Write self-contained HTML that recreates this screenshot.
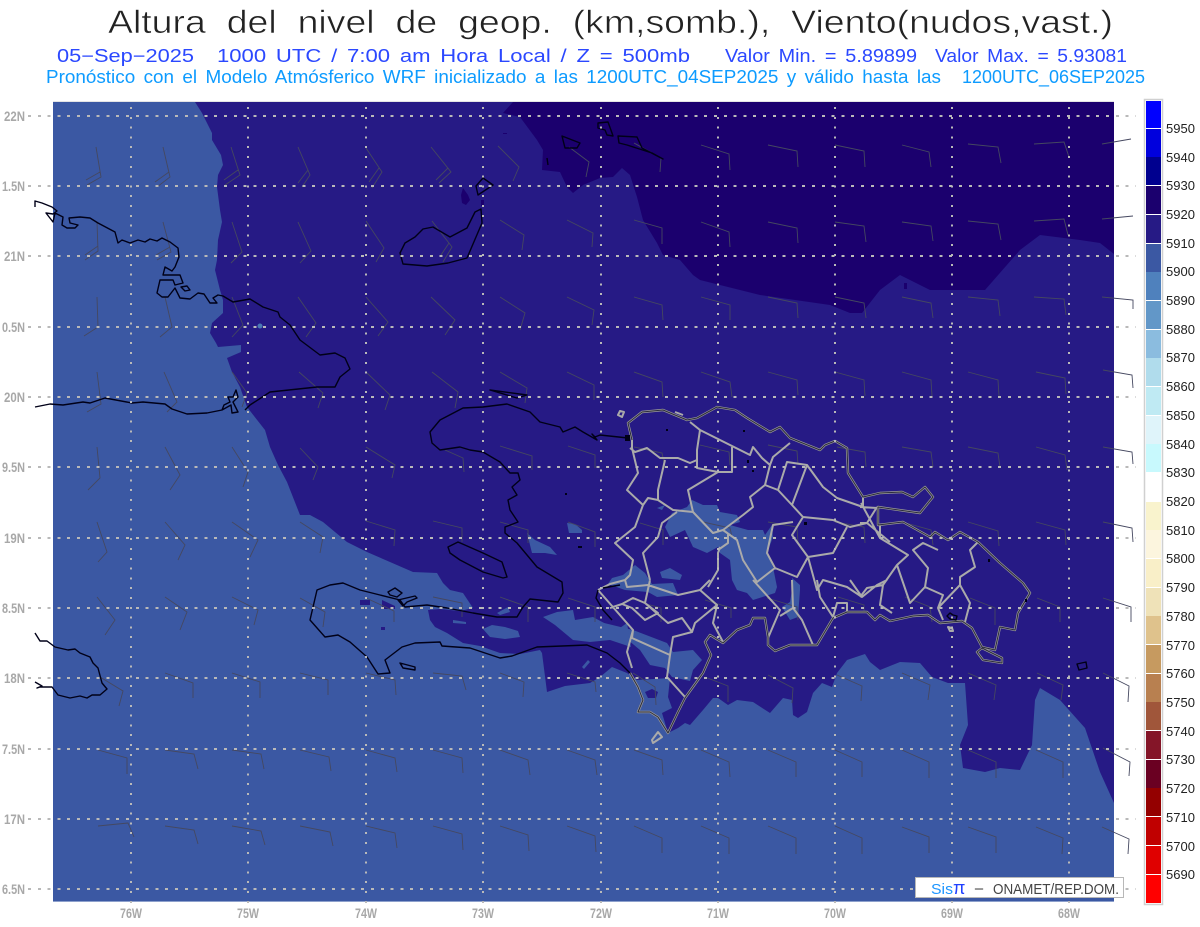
<!DOCTYPE html>
<html lang="es">
<head>
<meta charset="utf-8">
<title>Altura del nivel de geop.</title>
<style>
html,body{margin:0;padding:0;background:#fff;width:1200px;height:927px;overflow:hidden}
svg{display:block}
text{font-family:"Liberation Sans",sans-serif}
</style>
</head>
<body>
<svg width="1200" height="927" viewBox="0 0 1200 927" xmlns="http://www.w3.org/2000/svg">
<rect width="1200" height="927" fill="#fff"/>

<!-- headings -->
<text x="108" y="33" font-size="32" word-spacing="9" fill="#222" stroke="#fff" stroke-width=".55" paint-order="fill stroke" textLength="1005" lengthAdjust="spacingAndGlyphs">Altura del nivel de geop. (km,somb.), Viento(nudos,vast.)</text>
<g font-size="18" fill="#2b48ff" word-spacing="3">
<text x="57" y="62" textLength="137" lengthAdjust="spacingAndGlyphs">05−Sep−2025</text>
<text x="217" y="62" textLength="473" lengthAdjust="spacingAndGlyphs">1000 UTC / 7:00 am Hora Local / Z = 500mb</text>
<text x="725" y="62" textLength="192" lengthAdjust="spacingAndGlyphs">Valor Min. = 5.89899</text>
<text x="935" y="62" textLength="192" lengthAdjust="spacingAndGlyphs">Valor Max. = 5.93081</text>
</g>
<g font-size="18" fill="#0d9bff" word-spacing="3">
<text x="46" y="83" textLength="895" lengthAdjust="spacingAndGlyphs">Pronóstico con el Modelo Atmósferico WRF inicializado a las 1200UTC_04SEP2025 y válido hasta las</text>
<text x="962" y="83" textLength="183" lengthAdjust="spacingAndGlyphs">1200UTC_06SEP2025</text>
</g>

<!-- map fills -->
<rect x="53" y="101" width="1061" height="1" fill="#e4e4e4"/>
<rect x="53" y="102" width="1061" height="799" fill="#3b58a3"/>
<rect x="53" y="901" width="1061" height="1" fill="#8da0cc"/>
<path fill="#261a85" d="M195,102 202,113 212,133 212,140 221,155 223,165 218,175 217,187 220,210 222,222 218,240 217,260 215,270 220,290 223,300 223,313 212,323 210,333 216,343 218,347 241,345 241,352 227,358 232,372 240,387 247,407 265,430 270,447 278,465 287,482 300,515 310,515 323,522 347,542 367,552 390,562 413,572 437,573 443,583 450,590 463,593 473,608 460,611 440,609 428,610 430,620 435,627 447,633 463,643 480,646 500,653 520,654 540,650 542,653 547,692 565,686 590,683 600,677 612,667 627,673 637,680 670,678 668,697 672,708 662,713 668,733 678,728 685,723 690,725 703,710 713,698 718,698 728,705 737,700 753,702 770,713 783,698 792,700 793,715 798,718 807,712 813,693 822,683 827,685 832,687 837,673 847,660 865,654 870,662 880,670 900,662 920,663 932,677 948,683 965,683 968,725 960,745 963,768 985,772 1000,768 1020,770 1032,745 1035,700 1040,688 1060,700 1085,728 1100,772 1114,803 1114,102Z"/>
<path fill="#1b006e" d="M513,102 503,113 520,117 537,140 543,150 542,170 560,172 567,187 573,193 583,185 600,178 613,177 622,168 630,175 637,197 643,220 657,243 663,255 680,260 693,275 700,280 760,295 830,305 850,313 862,313 880,290 900,275 930,290 985,290 1020,250 1040,235 1080,240 1100,243 1114,254 1114,102Z"/>
<!-- light patches -->
<g fill="#3b58a3">
<path d="M692,500 703,505 717,505 720,512 737,515 740,522 730,525 748,530 763,530 765,535 772,525 773,537 767,553 773,567 777,587 775,593 753,600 747,593 737,590 732,580 730,560 720,553 718,547 707,553 693,547 685,530 670,537 665,527 672,513 687,507Z"/>
<path d="M792,578 800,585 800,590 798,617 790,620 782,607 790,602 792,590Z"/>
<path d="M635,565 645,573 652,584 673,583 678,595 657,597 648,592 625,590 608,584 612,578 623,575Z"/>
<path d="M660,572 670,568 682,575 680,580 662,578Z"/>
<path d="M590,624 600,622 633,630 667,643 673,652 693,650 702,660 693,670 690,681 672,677 665,668 650,665 640,650 628,640 610,632 598,640 590,640Z"/>
<path d="M453,620 466,622 466,624 453,623Z"/>
<path d="M483,629 492,625 505,627 518,631 520,637 505,639 490,637Z"/>
<path d="M543,617 557,612 573,610 575,620 593,617 617,630 627,623 631,647 610,640 590,642 573,640 555,625Z"/>
<path d="M567,523 575,524 582,530 582,533 569,533Z"/>
<path d="M527,533 535,540 550,547 557,555 545,553 532,553 530,545Z"/>
<path d="M497,613 508,607 510,612 500,615Z"/>
<path d="M657,508 665,505 662,510Z"/>
<path d="M582,667 588,660 590,662 584,669Z"/>
<circle cx="260" cy="326" r="2.5" fill="#4a78b5"/>
</g>
<g fill="#261a85">
<rect x="360" y="600" width="10" height="5"/>
<path d="M382,600 395,606 395,609 382,609Z"/>
<rect x="381" y="627" width="4" height="3"/>
<path d="M645,692 652,689 658,692 656,698 648,698Z"/>
<path d="M620,437 622,437 623,440 620,441Z"/>
</g>
<g fill="#1b006e">
<path d="M463,188 468,195 470,200 466,205 462,203 461,195Z"/>
<rect x="481" y="200" width="3" height="6"/>
<rect x="503" y="133" width="4" height="1"/>
<rect x="904" y="283" width="3" height="6"/>
</g>

<!-- wind barbs -->
<path fill="none" stroke="#454860" stroke-width=".9" d="
M96,147 101,177 87,185M100,172 86,180M163,147 170,177 157,187M169,172 155,182M231,147 240,175 225,185M238,170 224,180M298,147 310,175 302,187M308,170 298,183M366,148 382,172 372,188M379,168 369,182M431,147 451,172 439,183M448,168 436,180M498,146 519,167 513,181M569,147 589,162 586,177M634,143 661,158 660,172M701,145 729,154 730,170M768,145 797,151 798,167M835,145 864,151 865,167M902,145 929,152 931,167M968,144 998,147 1001,163M1034,144 1064,142 1069,157M1102,144 1131,139
M97,222 98,251 85,260M98,246 85,255M163,222 171,252 157,260M170,247 156,255M232,222 242,252 231,263M298,222 311,251 300,263M366,221 384,248 376,262M432,221 452,247 443,262M449,243 441,255M500,220 524,235 522,250M567,220 593,233 592,247M634,220 662,228 662,244M701,222 729,232 730,247M768,222 797,228 798,243M835,222 864,226 866,242M902,222 931,226 933,241M968,221 998,224 1001,240M1034,221 1064,219 1068,235M1102,219 1133,216
M97,297 98,327 84,336M165,297 172,327 160,337M232,297 243,325 232,337M298,297 316,323 306,337M366,297 388,322 378,336M431,297 455,320 445,335M500,297 525,313 520,330M567,297 594,310 592,325M634,297 662,305 663,320M701,297 730,305 730,320M768,297 797,303 798,318M835,297 864,303 866,318M902,297 931,303 933,318M968,297 998,300 1000,316M1034,297 1064,299 1066,315M1102,297 1133,300 1133,309
M97,372 101,404 87,412M164,372 177,402 167,412M232,372 247,393 242,407M299,372 323,393 318,408M366,372 390,395 385,410M432,372 458,392 455,408M500,372 527,388 525,403M567,372 594,385 594,400M634,372 662,382 663,397M701,372 730,382 732,397M768,372 797,380 798,395M835,372 864,380 865,396M902,372 931,380 932,396M968,372 998,380 999,396M1036,372 1065,378 1066,394M1103,370 1132,375 1133,388
M97,447 100,478 88,490M165,447 180,475 170,490M232,447 248,472 243,487M300,448 318,467 313,480M366,447 395,465 392,478M445,450 463,458 464,472M500,446 532,456 532,470M568,446 595,455 595,468M634,447 662,453 665,468M700,445 729,452 730,465M768,445 797,451 798,465M837,447 865,452 866,467M902,447 931,452 933,467M968,447 998,453 1000,467M1036,447 1065,455 1067,470M1103,447 1132,452 1133,464
M97,522 107,552 98,562M165,522 185,545 178,560M232,522 258,540 250,557M300,522 323,537 320,553M366,521 395,530 394,546M433,521 462,528 462,542M500,522 528,530 528,543M568,522 595,532 595,547M640,523 663,530 663,545M703,522 730,528 732,537M768,522 797,527 798,543M835,522 864,527 865,543M902,522 931,530 933,545M968,522 998,531 999,546M1036,522 1065,530 1066,545M1103,522 1132,528 1133,542
M97,597 115,620 105,635M165,597 187,612 180,630M232,597 258,610 254,625M300,598 325,612 323,627M366,598 394,611 394,622M433,597 462,603 462,617M500,597 528,607 528,622M568,598 595,607 595,622M643,603 661,608 661,622M705,600 731,608 731,618M767,598 797,607 798,620M838,597 864,605 864,612M905,597 930,607 932,622M970,598 995,608 995,625M1037,598 1060,607 1060,622M1103,598 1131,607 1131,622
M100,677 123,691 119,706M165,673 193,683 193,698M232,673 260,682 260,698M300,673 328,680 328,695M366,673 395,680 396,695M433,673 462,676 466,690M500,673 524,682 523,697M567,673 595,682 596,692M633,673 655,687 656,705M705,677 728,686 728,702M768,675 793,688 792,703M837,675 862,686 861,701M902,673 930,685 928,700M968,673 996,685 994,700M1037,673 1063,685 1061,700M1103,673 1129,686 1128,702
M98,750 127,758 127,774M165,750 194,754 198,769M232,750 261,754 264,769M300,750 329,757 331,771M366,750 395,758 397,772M433,750 462,758 463,773M500,750 528,760 530,775M567,750 595,760 597,775M634,750 662,760 663,775M701,750 729,762 730,777M768,750 796,762 796,777M835,750 862,762 862,777M902,750 929,762 929,778M968,750 996,762 996,778M1036,750 1063,762 1063,778M1103,748 1130,762 1129,776
M98,826 128,823 134,837M165,826 194,830 198,844M232,826 261,831 265,845M300,826 330,832 333,846M366,826 395,833 397,848M433,826 462,834 463,850M500,826 528,835 529,851M567,826 595,836 596,852M634,826 662,838 662,853M701,826 729,838 729,854M768,826 796,838 796,854M835,826 862,838 862,854M902,827 929,837 929,853M968,827 996,837 996,853M1036,827 1063,838 1062,854M1102,827 1129,839 1128,854"/>

<!-- province lines -->
<path fill="none" stroke="#aaaaaa" stroke-width="2" stroke-linejoin="round" d="
M632,440 632,448 638,473 627,490 643,505 635,527 615,543 633,560 630,575 625,580
M630,448 635,452 647,448 660,458 678,458 690,463 697,460 697,450 700,430 690,422
M700,430 730,445 750,455 753,447 762,458 770,465 773,457 790,443
M732,447 732,472 718,472 697,468 697,460
M665,460 658,490 658,500 673,510 693,512 688,490 708,478 718,472
M658,500 648,498 643,505
M693,512 713,533 723,530 743,515 753,507 750,497 765,485 770,465
M765,485 778,490 787,462 807,465 823,487 837,498 863,507 863,498
M807,465 792,505 778,490
M792,505 803,517 833,520 850,527 867,523 877,507
M867,523 890,542
M803,517 792,535 808,557 833,553 847,527
M808,557 797,577 775,568 767,553 773,525 793,522
M723,530 737,540 743,560 757,582 775,568
M677,512 662,523 658,537 643,553 650,580
M720,547 718,553 718,570 708,587
M718,550 728,543 728,533
M808,557 817,590 823,580 847,587 862,597 877,585 887,580
M850,580 862,597
M860,597 867,588 883,585 880,605 892,613
M883,585 897,565 908,555 880,538 861,503
M897,565 910,603 925,587 943,595 938,608 943,620
M925,587 928,568 913,550 923,543 938,550
M938,608 960,585 970,603 965,622
M960,585 960,577 975,567 970,550 978,542
M860,507 877,508M860,523 868,523M880,525 880,538
M598,590 633,630 627,652 632,668
M633,630 632,638 670,655 667,677 685,697
M598,590 610,584 625,580 627,587 648,585 678,595 700,590 710,580
M650,580 645,603 668,623 682,618 692,632 673,637 670,655
M610,608 622,604 633,598 645,603 658,613 645,620 632,608 622,604
M700,590 717,605 695,623 692,632
M717,605 713,623 723,642
M753,580 780,610 768,638
M780,616 793,608 802,620 813,645
M792,580 793,608
M817,580 820,597 833,617 837,603 847,603 847,612
M620,411 618,415 622,417 624,412Z
M675,412 683,415
M652,740 658,732 662,737 653,743Z
M948,627 952,628 953,631 950,631Z"/>

<!-- DR coast: grey under black -->
<g fill="none" stroke-linejoin="round">
<path stroke="#9a9a9a" stroke-width="2.4" d="M630,673 638,687 643,700 638,712 650,712 658,717 668,733 678,712 685,698 703,673 711,655 705,642 710,635 723,643 737,630 750,625 753,618 765,618 768,637 768,645 775,651 790,645 817,645 833,618 847,612 867,612 875,620 880,615 890,621 913,616 928,615 940,623 962,621 972,628 982,647 995,650 1000,627 1015,630 1018,613 1030,593 1023,583 1000,563 978,542 960,532 948,540 935,532 930,537 903,522 878,525 878,507 920,513 933,497 925,487 913,497 902,492 880,493 863,497 848,473 847,448 835,441 825,445 820,450 790,438 780,427 770,432 747,418 735,410 717,407 697,418 687,420 663,410 642,412 628,423 632,440 M977,652 982,648 1002,658 1002,663 983,660Z"/>
<path stroke="#2c2c3c" stroke-width="1" d="M630,673 638,687 643,700 638,712 650,712 658,717 668,733 678,712 685,698 703,673 711,655 705,642 710,635 723,643 737,630 750,625 753,618 765,618 768,637 768,645 775,651 790,645 817,645 833,618 847,612 867,612 875,620 880,615 890,621 913,616 928,615 940,623 962,621 972,628 982,647 995,650 1000,627 1015,630 1018,613 1030,593 1023,583 1000,563 978,542 960,532 948,540 935,532 930,537 903,522 878,525 878,507 920,513 933,497 925,487 913,497 902,492 880,493 863,497 848,473 847,448 835,441 825,445 820,450 790,438 780,427 770,432 747,418 735,410 717,407 697,418 687,420 663,410 642,412 628,423 632,440 M977,652 982,648 1002,658 1002,663 983,660Z"/>
</g>

<!-- black coasts -->
<path fill="none" stroke="#000018" stroke-width="1.4" stroke-linejoin="round" d="
M35,207 35,201 42,203 52,207 57,211 53,214 46,213 53,222 55,213 63,217 62,225 67,228 75,228 78,225 70,223 69,218 80,217 90,218 98,223 115,232 118,243 122,240 130,243 138,240 145,242 150,239 157,241 162,238 170,242 178,248 179,257 175,267 172,271 165,267 163,275 173,275 180,275 183,283 175,285 173,280 160,280 157,293 162,297 168,297 175,288 180,298 190,299 198,293 204,294 210,303 217,303 213,298 218,295 223,296 233,302 250,299 263,307 278,312 280,317 290,325 300,340 320,355 335,353 345,358 350,369 340,377 335,387 317,387 270,392 250,405 245,410
M35,407 50,404 63,405 83,402 90,403 105,398 132,403 143,402 165,404 172,409 187,414 207,413 222,410 224,405 230,402 228,397 233,397 236,390 238,397 233,402 238,412 232,413 231,405 222,410
M181,287 187,286 190,290 185,291Z
M400,253 405,243 415,237 423,229 433,227 450,237 467,228 475,212 481,209 482,223 467,258 448,263 427,266 403,264Z
M476,186 483,178 493,185 478,195Z
M562,136 580,143 577,148 565,148Z
M598,123 608,122 612,133 613,136 607,135 605,130 598,128Z
M618,136 637,137 642,148 663,159 652,153 627,145 619,143Z
M628,438 600,435 595,437 592,434 597,440 583,432 575,427 563,432 560,427 540,422 530,412 507,404 483,407 463,408 440,420 430,432 432,443 440,450 460,447 470,450 483,452 500,462 510,473 518,473 520,480 512,487 517,495 508,500 510,510 518,522 505,527 505,533 517,543 537,567 547,573 562,582 563,593 558,602 530,599 523,607 517,617 497,617 473,613 447,608 427,605 405,607 400,600 380,595 360,590 343,583 330,585 317,590 310,620 325,637 338,635 350,642 367,657 378,674 390,673 385,660 402,647 415,643 440,642 442,646 470,648 500,658 512,656 537,647 587,645 607,653 620,663 630,673
M598,590 596,598 603,610 612,620 M603,588 620,585
M448,547 458,542 483,553 502,562 507,577 503,578 483,572 460,560 450,553Z
M490,390 527,395 517,398Z
M400,663 415,667 415,670 403,668Z
M388,592 395,588 402,593 397,597 390,595Z
M398,600 415,596 417,598 407,602 403,606Z
M35,633 40,641 47,641 55,647 68,650 75,649 80,653 90,657 93,663 98,668 102,683 107,689 100,695 92,695 87,698 80,696 70,698 58,695 52,687 40,687 37,688 42,686 35,682
M947,616 950,613 953,615 957,616 956,620 950,619Z
M1077,664 1086,662 1087,668 1079,670Z
M547,158 548,165"/>
<g fill="#000018">
<rect x="625" y="435" width="5" height="6"/>
<rect x="988" y="559" width="2" height="3"/><rect x="1025" y="599" width="2" height="3"/>
<rect x="804" y="522" width="3" height="3"/><rect x="743" y="430" width="2" height="2"/>
<rect x="666" y="429" width="2" height="2"/><rect x="747" y="460" width="2" height="3"/>
<rect x="752" y="470" width="2" height="2"/><rect x="565" y="493" width="2" height="2"/><rect x="578" y="546" width="4" height="2"/>
</g>

<!-- dotted grid -->
<g fill="none" stroke="#b9b9b9" stroke-width="2" shape-rendering="crispEdges">
<path stroke-dasharray="3 6.8" d="M28,116H1136M28,186H1136M28,256H1136M28,327H1136M28,397H1136M28,467H1136M28,538H1136M28,608H1136M28,678H1136M28,749H1136M28,819H1136M28,889H1136"/>
<path stroke-dasharray="2 7.8" d="M131,107V906M248,107V906M366,107V906M483,107V906M601,107V906M718,107V906M835,107V906M952,107V906M1069,107V906"/>
</g>

<!-- axis labels -->
<g font-size="14" font-weight="700" fill="#a8a8a8" lengthAdjust="spacingAndGlyphs">
<text x="4" y="121" textLength="21" lengthAdjust="spacingAndGlyphs">22N</text><text x="2" y="191" textLength="23" lengthAdjust="spacingAndGlyphs">1.5N</text><text x="4" y="261" textLength="21" lengthAdjust="spacingAndGlyphs">21N</text><text x="2" y="332" textLength="23" lengthAdjust="spacingAndGlyphs">0.5N</text><text x="4" y="402" textLength="21" lengthAdjust="spacingAndGlyphs">20N</text><text x="2" y="472" textLength="23" lengthAdjust="spacingAndGlyphs">9.5N</text><text x="4" y="543" textLength="21" lengthAdjust="spacingAndGlyphs">19N</text><text x="2" y="613" textLength="23" lengthAdjust="spacingAndGlyphs">8.5N</text><text x="4" y="683" textLength="21" lengthAdjust="spacingAndGlyphs">18N</text><text x="2" y="754" textLength="23" lengthAdjust="spacingAndGlyphs">7.5N</text><text x="4" y="824" textLength="21" lengthAdjust="spacingAndGlyphs">17N</text><text x="2" y="894" textLength="23" lengthAdjust="spacingAndGlyphs">6.5N</text>
</g>
<g font-size="14" font-weight="700" fill="#a8a8a8">
<text x="120" y="918" textLength="22" lengthAdjust="spacingAndGlyphs">76W</text><text x="237" y="918" textLength="22" lengthAdjust="spacingAndGlyphs">75W</text><text x="355" y="918" textLength="22" lengthAdjust="spacingAndGlyphs">74W</text><text x="472" y="918" textLength="22" lengthAdjust="spacingAndGlyphs">73W</text><text x="590" y="918" textLength="22" lengthAdjust="spacingAndGlyphs">72W</text><text x="707" y="918" textLength="22" lengthAdjust="spacingAndGlyphs">71W</text><text x="824" y="918" textLength="22" lengthAdjust="spacingAndGlyphs">70W</text><text x="941" y="918" textLength="22" lengthAdjust="spacingAndGlyphs">69W</text><text x="1058" y="918" textLength="22" lengthAdjust="spacingAndGlyphs">68W</text>
</g>

<!-- logo box -->
<rect x="915.5" y="877.5" width="208" height="20" fill="#fff" stroke="#b8b8b8"/>
<text x="931" y="894" font-size="15" fill="#1d95ff" textLength="22" lengthAdjust="spacingAndGlyphs">Sis</text>
<text x="953" y="894" font-size="18" fill="#2040ff">π</text>
<text x="974" y="894" font-size="15" fill="#444" textLength="10" lengthAdjust="spacingAndGlyphs">−</text>
<text x="993" y="894" font-size="15" fill="#444" textLength="126" lengthAdjust="spacingAndGlyphs">ONAMET/REP.DOM.</text>

<!-- colour bar -->
<rect x="1144.5" y="99.5" width="18" height="805" fill="#fff" stroke="#d0d0d0" stroke-width="1.5"/>
<g shape-rendering="crispEdges">
<rect x="1146" y="101" width="15" height="27" fill="#0000ff"/>
<rect x="1146" y="129" width="15" height="28" fill="#0000dd"/>
<rect x="1146" y="157" width="15" height="28" fill="#00008f"/>
<rect x="1146" y="186" width="15" height="28" fill="#1b006e"/>
<rect x="1146" y="215" width="15" height="28" fill="#261a85"/>
<rect x="1146" y="244" width="15" height="28" fill="#3b58a3"/>
<rect x="1146" y="272" width="15" height="28" fill="#4f81bd"/>
<rect x="1146" y="301" width="15" height="28" fill="#6297c8"/>
<rect x="1146" y="330" width="15" height="28" fill="#8bbcdf"/>
<rect x="1146" y="358" width="15" height="28" fill="#b0dcec"/>
<rect x="1146" y="387" width="15" height="28" fill="#bfeaf3"/>
<rect x="1146" y="416" width="15" height="28" fill="#dff4fa"/>
<rect x="1146" y="444" width="15" height="28" fill="#c8f9fd"/>
<rect x="1146" y="473" width="15" height="28" fill="#ffffff"/>
<rect x="1146" y="502" width="15" height="28" fill="#f9f3cd"/>
<rect x="1146" y="530" width="15" height="28" fill="#fcf5de"/>
<rect x="1146" y="559" width="15" height="28" fill="#f9efc8"/>
<rect x="1146" y="588" width="15" height="28" fill="#efe2b8"/>
<rect x="1146" y="616" width="15" height="28" fill="#dfc28c"/>
<rect x="1146" y="645" width="15" height="28" fill="#c69a60"/>
<rect x="1146" y="674" width="15" height="28" fill="#b88050"/>
<rect x="1146" y="702" width="15" height="28" fill="#a0563a"/>
<rect x="1146" y="731" width="15" height="28" fill="#841528"/>
<rect x="1146" y="760" width="15" height="28" fill="#6a0022"/>
<rect x="1146" y="788" width="15" height="28" fill="#940000"/>
<rect x="1146" y="817" width="15" height="28" fill="#c00000"/>
<rect x="1146" y="846" width="15" height="28" fill="#e00000"/>
<rect x="1146" y="875" width="15" height="28" fill="#ff0000"/>
</g>
<g font-size="13" fill="#222">
<text x="1166" y="133">5950</text><text x="1166" y="162">5940</text><text x="1166" y="190">5930</text><text x="1166" y="219">5920</text><text x="1166" y="248">5910</text><text x="1166" y="276">5900</text><text x="1166" y="305">5890</text><text x="1166" y="334">5880</text><text x="1166" y="362">5870</text><text x="1166" y="391">5860</text><text x="1166" y="420">5850</text><text x="1166" y="449">5840</text><text x="1166" y="477">5830</text><text x="1166" y="506">5820</text><text x="1166" y="535">5810</text><text x="1166" y="563">5800</text><text x="1166" y="592">5790</text><text x="1166" y="621">5780</text><text x="1166" y="650">5770</text><text x="1166" y="678">5760</text><text x="1166" y="707">5750</text><text x="1166" y="736">5740</text><text x="1166" y="764">5730</text><text x="1166" y="793">5720</text><text x="1166" y="822">5710</text><text x="1166" y="851">5700</text><text x="1166" y="879">5690</text>
</g>
</svg>
</body>
</html>
